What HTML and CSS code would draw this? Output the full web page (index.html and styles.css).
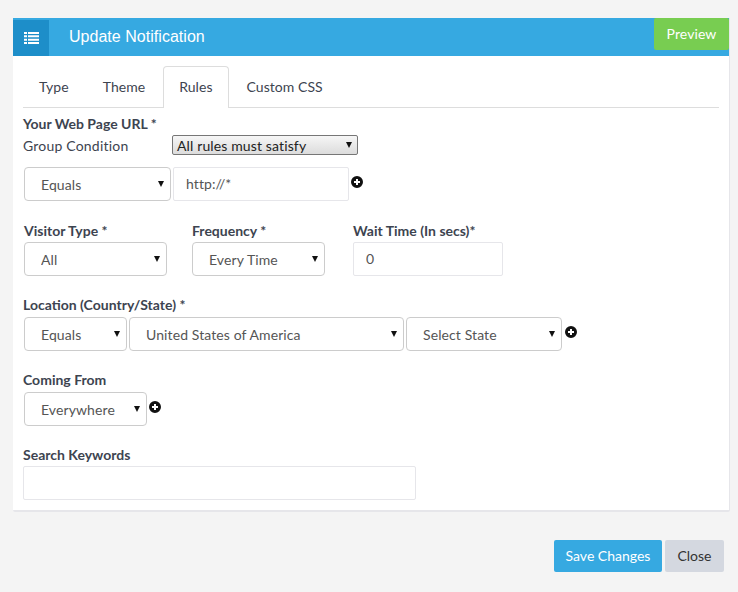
FILE: index.html
```html
<!DOCTYPE html>
<html lang="en">

<head>
    <meta charset="UTF-8">
    <title>Update Notification</title>
    <link rel="stylesheet" href="styles.css">
</head>

<body>
    <div class="panel">
        <div class="panel-head">
            <span class="head-icon">
                <svg width="15" height="12" viewBox="0 0 15 12">
                    <path fill="#fff" d="M0 0h3v2H0zM4 0h11v2H4zM0 3.3h3v2H0zM4 3.3h11v2H4zM0 6.7h3v2H0zM4 6.7h11v2H4zM0 10h3v2H0zM4 10h11v2H4z"/>
                </svg>
            </span>
            <h1 class="head-title">Update Notification</h1>
            <a class="btn-preview">Preview</a>
        </div>

        <div class="panel-body">
            <ul class="tabs">
                <li><a>Type</a></li>
                <li><a>Theme</a></li>
                <li class="active"><a>Rules</a></li>
                <li><a>Custom CSS</a></li>
            </ul>

            <label class="field-label url-label">Your Web Page URL *</label>
            <div class="group-row">
                <span class="group-text">Group Condition</span>
                <div class="native-select">All rules must satisfy</div>
            </div>

            <div class="row url-row">
                <div class="select w-equals-lg"><select><option>Equals</option></select></div>
                <input class="input w-url" type="text" value="http://*">
                <svg class="plus" viewBox="0 0 12 12"><use href="#plus-circle"/></svg>
            </div>

            <div class="row columns">
                <div class="col-visitor">
                    <label class="field-label">Visitor Type *</label>
                    <div class="select w-visitor"><select><option>All</option></select></div>
                </div>
                <div class="col-frequency">
                    <label class="field-label">Frequency *</label>
                    <div class="select w-frequency"><select><option>Every Time</option></select></div>
                </div>
                <div class="col-wait">
                    <label class="field-label">Wait Time (In secs)*</label>
                    <input class="input w-wait" type="text" value="0">
                </div>
            </div>

            <label class="field-label location-label">Location (Country/State) *</label>
            <div class="row">
                <div class="select w-equals"><select><option>Equals</option></select></div>
                <div class="select w-country"><select><option>United States of America</option></select></div>
                <div class="select w-state"><select><option>Select State</option></select></div>
                <svg class="plus plus-far" viewBox="0 0 12 12"><use href="#plus-circle"/></svg>
            </div>

            <label class="field-label coming-label">Coming From</label>
            <div class="row">
                <div class="select w-coming"><select><option>Everywhere</option></select></div>
                <svg class="plus" viewBox="0 0 12 12"><use href="#plus-circle"/></svg>
            </div>

            <label class="field-label search-label">Search Keywords</label>
            <input class="input w-search" type="text">
        </div>
    </div>

    <div class="actions">
        <a class="btn btn-save">Save Changes</a>
        <a class="btn btn-close">Close</a>
    </div>

    <svg class="defs" width="0" height="0">
        <symbol id="plus-circle" viewBox="0 0 12 12">
            <path fill="#111" fill-rule="evenodd" d="M6 0a6 6 0 1 1 0 12A6 6 0 0 1 6 0zM5 3v2H3v2h2v2h2V7h2V5H7V3z"/>
        </symbol>
    </svg>
</body>

</html>
```

FILE: styles.css
```css
* {
    box-sizing: border-box;
}

body {
    margin: 0;
    background-color: #f4f4f4;
    font-family: Lato, "Liberation Sans", sans-serif;
    font-size: 14px;
    letter-spacing: 0.1px;
    color: #3d4450;
}

.panel {
    width: 717px;
    margin: 18px 0 0 13px;
    background-color: #fff;
    border-right: 1px solid #e6e6ea;
    border-bottom: 2px solid #e6e6ea;
    border-radius: 0 0 2px 2px;
}

.panel-head {
    display: flex;
    height: 38px;
    background-color: #36a9e1;
}

.head-icon {
    display: flex;
    align-items: center;
    justify-content: center;
    width: 36px;
    height: 36px;
    margin-top: 2px;
    background-color: #1d8ec9;
}

.head-title {
    flex-grow: 1;
    margin: 0 0 0 20px;
    font-family: "Liberation Sans", Arial, sans-serif;
    font-size: 16px;
    font-weight: 400;
    line-height: 37px;
    letter-spacing: 0.03px;
    color: #fff;
}

.btn-preview {
    width: 75px;
    height: 32px;
    background-color: #78cd51;
    border-radius: 2px;
    text-align: center;
    line-height: 31px;
    color: #fff;
}

.panel-body {
    padding: 10px;
}

.tabs {
    display: flex;
    height: 42px;
    margin: 0;
    padding: 0;
    list-style: none;
    border-bottom: 1px solid #ddd;
}

.tabs li {
    height: 42px;
    margin-right: 2px;
    padding: 0 15px;
    line-height: 40px;
    letter-spacing: 0.05px;
    white-space: nowrap;
    border: 1px solid transparent;
    border-bottom: 0;
    border-radius: 4px 4px 0 0;
}

.tabs li.active {
    background-color: #fff;
    border-color: #ddd;
}

.field-label {
    display: block;
    font-weight: 700;
    line-height: 20px;
    letter-spacing: 0;
}

.url-label {
    margin-top: 6px;
}

.group-row {
    display: flex;
    align-items: center;
    height: 20px;
    margin-top: 1px;
}

.group-text {
    width: 149px;
    letter-spacing: 0.2px;
}

.native-select {
    position: relative;
    width: 186px;
    height: 20px;
    padding-left: 4px;
    border: 1px solid #767676;
    border-radius: 2px;
    background: linear-gradient(#f6f6f6, #dcdcdc);
    line-height: 20px;
    letter-spacing: 0.13px;
    color: #222;
}

.native-select::after {
    content: "";
    position: absolute;
    top: 6px;
    right: 5px;
    border-top: 6px solid #111;
    border-left: 3px solid transparent;
    border-right: 3px solid transparent;
}

.row {
    display: flex;
    gap: 2px;
    padding-left: 1px;
}

.url-row {
    margin-top: 12px;
}

.columns {
    gap: 0;
    margin-top: 20px;
}

.columns .field-label {
    margin-bottom: 1px;
}

.col-visitor {
    width: 168px;
}

.col-frequency {
    width: 161px;
}

.select {
    position: relative;
    height: 34px;
}

.select select {
    width: 100%;
    height: 100%;
    padding: 0 16px;
    appearance: none;
    background-color: #fff;
    border: 1px solid #ccc;
    border-radius: 4px;
    font-family: inherit;
    font-size: 14px;
    letter-spacing: inherit;
    color: #555;
}

.select::after {
    content: "";
    position: absolute;
    top: 14px;
    right: 7px;
    border-top: 6px solid #111;
    border-left: 3px solid transparent;
    border-right: 3px solid transparent;
}

.input {
    display: block;
    height: 34px;
    padding: 0 12px 2px;
    background-color: #fff;
    border: 1px solid #e6e6ea;
    border-radius: 2px;
    font-family: inherit;
    font-size: 14px;
    letter-spacing: inherit;
    color: #555;
}

.plus {
    width: 12px;
    height: 12px;
    margin-top: 9px;
}

.plus-far {
    margin-left: 1px;
}

.defs {
    position: absolute;
}

.w-equals-lg {
    width: 147px;
}

.w-url {
    width: 176px;
}

.w-visitor {
    width: 143px;
}

.w-frequency {
    width: 133px;
}

.w-wait {
    width: 150px;
}

.w-equals {
    width: 103px;
}

.w-country {
    width: 275px;
}

.w-state {
    width: 156px;
}

.w-coming {
    width: 123px;
}

.w-search {
    width: 393px;
}

.location-label,
.coming-label {
    margin-top: 19px;
    margin-bottom: 2px;
}

.search-label {
    margin-top: 19px;
    margin-bottom: 1px;
}

.actions {
    display: flex;
    justify-content: flex-end;
    gap: 3px;
    margin-top: 28px;
    padding-right: 14px;
}

.btn {
    height: 32px;
    border-radius: 2px;
    text-align: center;
    line-height: 32px;
    letter-spacing: 0;
}

.btn-save {
    width: 108px;
    background-color: #36a9e1;
    color: #fff;
}

.btn-close {
    width: 59px;
    background-color: #d4d8e0;
    color: #333;
}
```
